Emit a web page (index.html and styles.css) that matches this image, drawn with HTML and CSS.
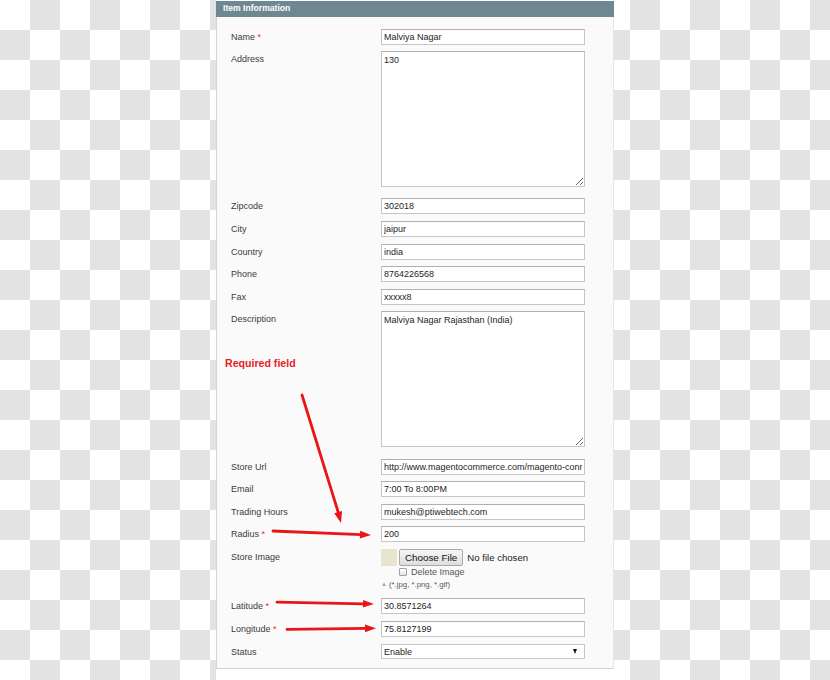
FILE: index.html
```html
<!DOCTYPE html>
<html>
<head>
<meta charset="utf-8">
<link rel="stylesheet" href="styles.css">
</head>
<body>
<div class="page">
  <div class="legend">Item Information</div>
  <div class="fieldset">
    <div class="row"><div class="lbl">Name <span class="req">*</span></div><input class="txt" value="Malviya Nagar"></div>
    <div class="row row-area"><div class="lbl">Address</div><textarea class="area">130</textarea></div>
    <div class="row"><div class="lbl">Zipcode</div><input class="txt" value="302018"></div>
    <div class="row"><div class="lbl">City</div><input class="txt" value="jaipur"></div>
    <div class="row"><div class="lbl">Country</div><input class="txt" value="india"></div>
    <div class="row"><div class="lbl">Phone</div><input class="txt" value="8764226568"></div>
    <div class="row"><div class="lbl">Fax</div><input class="txt" value="xxxxx8"></div>
    <div class="row row-area"><div class="lbl">Description</div><textarea class="area">Malviya Nagar Rajasthan (India)</textarea></div>
    <div class="row"><div class="lbl">Store Url</div><input class="txt" value="http://www.magentocommerce.com/magento-connect/"></div>
    <div class="row"><div class="lbl">Email</div><input class="txt" value="7:00 To 8:00PM"></div>
    <div class="row"><div class="lbl">Trading Hours</div><input class="txt" value="mukesh@ptiwebtech.com"></div>
    <div class="row"><div class="lbl">Radius <span class="req">*</span></div><input class="txt" value="200"></div>
    <div class="row row-file">
      <div class="lbl">Store Image</div>
      <div class="filebox">
        <div class="fileline"><span class="thumb"></span><span class="fbtn">Choose File</span><span class="fname">No file chosen</span></div>
        <div class="delline"><span class="chk"></span><span class="deltext">Delete Image</span></div>
        <div class="hint"><span class="tri">&#9650;</span>(*.jpg, *.png, *.gif)</div>
      </div>
    </div>
    <div class="row"><div class="lbl">Latitude <span class="req">*</span></div><input class="txt" value="30.8571264"></div>
    <div class="row"><div class="lbl">Longitude <span class="req">*</span></div><input class="txt" value="75.8127199"></div>
    <div class="row row-last"><div class="lbl">Status</div><div class="sel"><span class="selval">Enable</span><span class="selarrow"></span></div></div>
  </div>
</div>
<div class="note">Required field</div>
<svg class="annot" width="830" height="680" viewBox="0 0 830 680">
  <g stroke="#ea1518" stroke-width="2.8" stroke-linecap="round" fill="none">
    <line x1="302" y1="395" x2="338.3" y2="512.5"/>
    <line x1="273" y1="531" x2="361" y2="534.6"/>
    <line x1="277" y1="602.2" x2="364" y2="603.8"/>
    <line x1="287" y1="629.4" x2="366" y2="628.4"/>
  </g>
  <g fill="#ea1518">
    <polygon points="341,523 334.2,513.3 342,510.9"/>
    <polygon points="371,535 360.2,530.7 359.8,538.5"/>
    <polygon points="374,604 363.1,600 362.9,607.6"/>
    <polygon points="376,628.3 365,624.5 365,632.2"/>
  </g>
</svg>
</body>
</html>
```

FILE: styles.css
```css
html, body {
  margin: 0;
  padding: 0;
}
body {
  width: 830px;
  height: 680px;
  overflow: hidden;
  position: relative;
  font-family: "Liberation Sans", Arial, sans-serif;
  background: repeating-conic-gradient(#e3e3e3 0 25%, #ffffff 0 50%) 0 0 / 60px 60px;
}
.page {
  margin-left: 216px;
  width: 398px;
  height: 680px;
  background: #ffffff;
  padding-top: 1px;
  box-sizing: border-box;
}
.legend {
  height: 15.5px;
  background: #6e8791;
  color: #ffffff;
  font-weight: bold;
  font-size: 8.6px;
  line-height: 15.5px;
  padding-left: 7px;
}
.fieldset {
  background: #fafafa;
  border-left: 1px solid #d4d4d4;
  border-right: 1px solid #e6e6e6;
  border-bottom: 1px solid #d2d2d2;
  padding: 12px 0 2px 14px;
}
.row {
  display: flex;
  align-items: flex-start;
  height: 22.6px;
}
.row-area {
  height: 147.3px;
}
.row-file {
  height: 49.3px;
}
.row-last {
  height: 22.6px;
}
.lbl {
  width: 150px;
  flex: none;
  font-size: 9px;
  line-height: 16px;
  color: #3a3a3a;
}
.req {
  color: #eb2e10;
}
.txt {
  box-sizing: border-box;
  width: 204px;
  height: 16px;
  margin: 0;
  padding: 0 2px;
  border: 1px solid #c6c6c6;
  border-top-color: #b0b0b0;
  background: #ffffff;
  font-family: "Liberation Sans", Arial, sans-serif;
  font-size: 9px;
  color: #1e1e1e;
  outline: none;
}
.area {
  box-sizing: border-box;
  width: 204px;
  height: 136px;
  margin: 0;
  padding: 3px 2px;
  border: 1px solid #c6c6c6;
  border-top-color: #b0b0b0;
  background: #ffffff;
  font-family: "Liberation Sans", Arial, sans-serif;
  font-size: 9px;
  line-height: 11px;
  color: #1e1e1e;
  resize: both;
  outline: none;
}
.filebox {
  display: flex;
  flex-direction: column;
  margin-top: -1px;
}
.fileline {
  display: flex;
  align-items: center;
  height: 18px;
}
.thumb {
  width: 16px;
  height: 17px;
  background: #e7e4cf;
  margin-right: 2px;
}
.fbtn {
  box-sizing: border-box;
  height: 17px;
  padding: 0 5px;
  border: 1px solid #a9a9a9;
  border-radius: 2px;
  background: linear-gradient(#f6f6f6, #dedede);
  font-size: 9.8px;
  line-height: 15px;
  color: #111111;
}
.fname {
  margin-left: 4px;
  font-size: 9.6px;
  color: #222222;
}
.delline {
  display: flex;
  align-items: center;
  height: 11px;
  padding-left: 18px;
}
.chk {
  box-sizing: border-box;
  width: 8px;
  height: 8px;
  border: 1px solid #a0a0a0;
  border-radius: 1px;
  background: linear-gradient(#ffffff, #e4e4e4);
  margin-right: 4px;
}
.deltext {
  font-size: 9px;
  color: #555555;
}
.hint {
  height: 12px;
  line-height: 12px;
  margin-top: 1px;
  font-size: 7.8px;
  color: #5a5a5a;
}
.tri {
  font-size: 6px;
  color: #a5a5a5;
  margin-right: 2px;
  vertical-align: 1px;
}
.sel {
  position: relative;
  box-sizing: border-box;
  width: 204px;
  height: 15px;
  margin-top: 0.5px;
  border: 1px solid #c6c6c6;
  background: #ffffff;
  font-size: 9px;
  line-height: 14px;
  padding-left: 2px;
  color: #1e1e1e;
}
.selarrow {
  position: absolute;
  right: 7px;
  top: 4px;
  width: 0;
  height: 0;
  border-left: 2.5px solid transparent;
  border-right: 2.5px solid transparent;
  border-top: 5px solid #111111;
}
.note {
  position: absolute;
  left: 225px;
  top: 356px;
  font-size: 10.6px;
  font-weight: bold;
  line-height: 14px;
  color: #e61b1e;
}
.annot {
  position: absolute;
  left: 0;
  top: 0;
  pointer-events: none;
}
```
